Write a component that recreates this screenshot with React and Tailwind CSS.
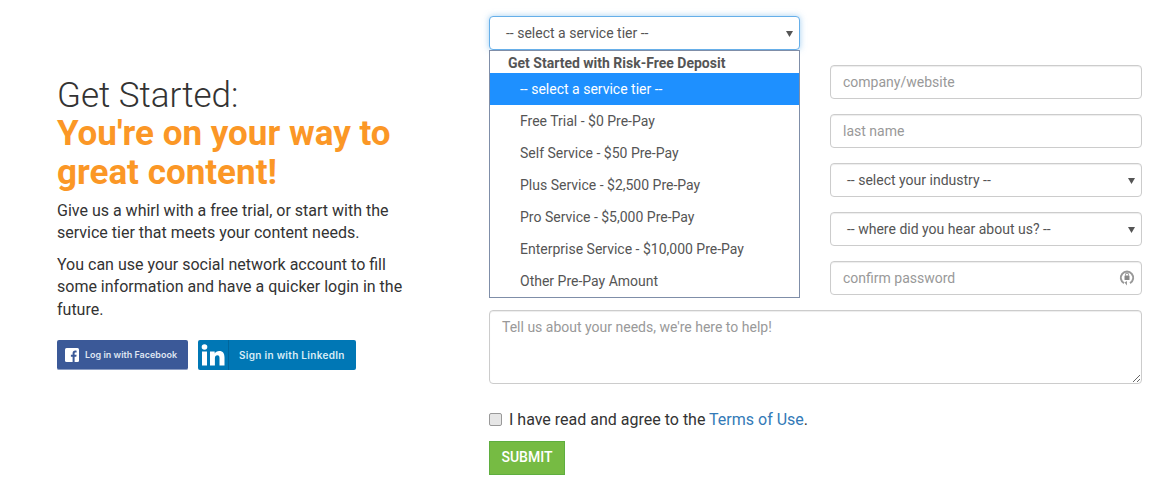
const tiers = [
  'Free Trial - $0 Pre-Pay',
  'Self Service - $50 Pre-Pay',
  'Plus Service - $2,500 Pre-Pay',
  'Pro Service - $5,000 Pre-Pay',
  'Enterprise Service - $10,000 Pre-Pay',
  'Other Pre-Pay Amount',
]

const field = 'h-[34px] w-full rounded border border-[#ccc] bg-white px-3 text-[14px] text-[#555] shadow-[inset_0_1px_1px_rgba(0,0,0,0.075)] placeholder:text-[#999] outline-none'
const selectBox = 'relative flex h-[34px] w-full items-center rounded border bg-white pl-4 text-[14px] text-[#555]'

function Caret() {
  return (
    <svg className="absolute right-[6px] top-[13px]" width="7" height="7" viewBox="0 0 7 7">
      <path d="M0 1h7L3.500 7z" fill="#555" />
    </svg>
  )
}

function FakeSelect({ label, focused }) {
  return (
    <div className={focused
      ? `${selectBox} border-[#66afe9] shadow-[0_0_6px_rgba(102,175,233,0.6)]`
      : `${selectBox} border-[#ccc] shadow-[inset_0_1px_1px_rgba(0,0,0,0.075)]`}>
      <span>{label}</span>
      <Caret />
    </div>
  )
}

function TierMenu() {
  return (
    <div className="absolute left-0 top-[34px] z-10 w-[311px] h-[248px] border border-[#7f8ea8] bg-white text-[14px] text-[#555]">
      <div className="h-[22px] pl-[18px] pt-[3px] leading-[18px] font-bold">Get Started with Risk-Free Deposit</div>
      <div className="h-8 bg-[#1e90ff] pl-[30px] leading-[32px] text-white">-- select a service tier --</div>
      {tiers.map((t) => (
        <div key={t} className="h-8 pl-[30px] leading-[32px]">{t}</div>
      ))}
    </div>
  )
}

function KeyIcon() {
  return (
    <svg className="absolute right-[7px] top-[8px]" width="16" height="18" viewBox="0 0 16 18" fill="none">
      <path d="M5 14.200A6.200 6.200 0 1 1 11 14.200" stroke="#999" strokeWidth="2" />
      <path d="M5.500 13.500L8 16.500L8 12z" fill="#999" />
      <rect x="5.500" y="6.500" width="5" height="4.500" rx="0.500" fill="#888" />
      <path d="M6.500 6.500V5.500a1.500 1.500 0 0 1 3 0v1" stroke="#888" />
    </svg>
  )
}

export default function App() {
  return (
    <div className="flex h-[484px] w-[1173px] overflow-hidden bg-white pl-[57px] font-['Roboto',sans-serif] text-[#333]">
      {/* left intro */}
      <div className="w-[348px] pt-[76.8px] shrink-0">
        <h1 className="text-[35px] leading-[38.5px] font-light">Get Started:</h1>
        <h2 className="w-[345px] text-[35px] leading-[38.5px] font-bold text-[#fb9726]">You're on your way to great content!</h2>
        <p className="mt-[7.7px] text-[16px] leading-[22.4px]">
          Give us a whirl with a free trial, or start with the service tier that meets your content needs.
        </p>
        <p className="mt-[9.2px] text-[16px] leading-[22.4px]">
          You can use your social network account to fill some information and have a quicker login in the future.
        </p>
        <div className="mt-[18.8px] flex gap-[10px]">
          <div className="flex h-[30px] w-[131px] items-center rounded-[2px] border-b border-[#8b9dc3] bg-[#3b5998] pl-2 font-['Inter',sans-serif] text-[9px] font-semibold text-[#dfe5f2]">
            <svg width="14" height="14" viewBox="0 0 14 14" className="mr-[6px]">
              <rect width="14" height="14" rx="1.500" fill="#fff" />
              <path d="M9.600 14V8.800h1.700l.3-2H9.600V5.500c0-.6.2-1 1-1h1V2.700c-.2 0-.8-.1-1.500-.1-1.500 0-2.500.9-2.500 2.600V6.800H5.900v2h1.700V14z" fill="#3b5998" />
            </svg>
            Log in with Facebook
          </div>
          <div className="flex h-[30px] w-[158px] items-center rounded-[2px] bg-[#0077b5] font-['Inter',sans-serif] text-[10px] font-semibold tracking-[0.3px] text-[#d9edf7]">
            <span className="flex h-full w-[31px] shrink-0 items-center justify-center border-r border-[#00669c]">
              <svg width="26" height="24" viewBox="0 0 26 24">
                <circle cx="4.500" cy="4" r="2.800" fill="#fff" />
                <rect x="2" y="8.500" width="5" height="14" fill="#fff" />
                <path d="M10 8.500h4.700v2c.8-1.400 2.300-2.400 4.500-2.400 4 0 5.300 2.500 5.300 6.300v8.100h-5v-7.200c0-1.800-.5-3-2.100-3-1.700 0-2.500 1.200-2.500 3v7.200H10z" fill="#fff" />
              </svg>
            </span>
            <span className="pl-[10px]">Sign in with LinkedIn</span>
          </div>
        </div>
      </div>

      {/* form */}
      <div className="ml-[84px] w-[653px] pt-4 shrink-0">
        <div className="grid grid-cols-[311px_312px] gap-x-[30px] gap-y-[15px]">
          <div className="relative">
            <FakeSelect label="-- select a service tier --" focused />
            <TierMenu />
          </div>
          <div />
          <input className={field} placeholder="first name" />
          <input className={field} placeholder="company/website" />
          <input className={field} placeholder="email" />
          <input className={field} placeholder="last name" />
          <input className={field} placeholder="phone" />
          <FakeSelect label="-- select your industry --" />
          <input className={field} placeholder="username" />
          <FakeSelect label="-- where did you hear about us? --" />
          <input className={field} placeholder="password" />
          <div className="relative">
            <input className={field} placeholder="confirm password" />
            <KeyIcon />
          </div>
        </div>
        <textarea
          className="mt-[15px] block h-[74px] w-full rounded border border-[#ccc] px-3 py-[6px] text-[14px] text-[#555] shadow-[inset_0_1px_1px_rgba(0,0,0,0.075)] placeholder:text-[#999] outline-none"
          placeholder="Tell us about your needs, we're here to help!"
        />
        <label className="mt-[25px] flex h-[22px] items-center text-[16px]">
          <input type="checkbox" className="m-0 mb-[2px] h-[13px] w-[13px] appearance-none rounded-[2px] border border-[#999] bg-[#e6e6e6]" />
          <span className="ml-[7px]">I have read and agree to the <a className="text-[#337ab7]">Terms of Use</a>.</span>
        </label>
        <button className="mt-[10px] block h-[34px] w-[76px] border border-[#5fae3f] bg-[#76bb43] pb-[2px] text-[14px] font-medium text-white">SUBMIT</button>
      </div>
    </div>
  )
}
